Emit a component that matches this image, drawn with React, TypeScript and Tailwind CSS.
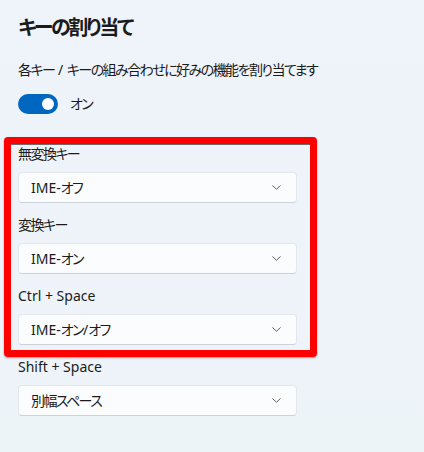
import React, { useState } from 'react';

const fieldFont = { fontFamily: '"Noto Sans", "Noto Sans CJK JP", sans-serif', fontFeatureSettings: '"palt"' };

interface Mapping {
  label: string;
  value: string;
}

const mappings: Mapping[] = [
  { label: '無変換キー', value: 'IME-オフ' },
  { label: '変換キー', value: 'IME-オン' },
  { label: 'Ctrl + Space', value: 'IME-オン/オフ' },
  { label: 'Shift + Space', value: '別幅スペース' },
];

// Yu Gothic UI kana run narrower than Noto's, so tighten only the CJK runs
const Jp: React.FC<{ text: string }> = ({ text }) => (
  <>
    {text.split(/([\u3000-\u9fff\uff00-\uffef]+)/).map((part, i) =>
      i % 2 === 1 ? (
        <span key={i} className="tracking-[-0.11em]">{part}</span>
      ) : (
        <React.Fragment key={i}>{part}</React.Fragment>
      )
    )}
  </>
);

const Chevron = () => (
  <svg width="9" height="5" viewBox="0 0 9 5" fill="none">
    <path d="M0.75 0.75l3.75 3.5 3.75-3.5" stroke="#5c5c5c" strokeWidth="1" strokeLinecap="round" strokeLinejoin="round" />
  </svg>
);

const Dropdown: React.FC<{ value: string }> = ({ value }) => (
  <button className="flex items-center justify-between w-[279px] h-[31px] pl-[12px] pr-[15px] rounded-[4px] bg-[#fbfcfd] border border-[#e3e7eb] border-b-[#cdd2d7] text-[14px] text-[#1b1b1b] leading-none">
    <span><Jp text={value} /></span>
    <Chevron />
  </button>
);

export default function App() {
  const [enabled, setEnabled] = useState(true);

  return (
    <div
      className="relative w-[424px] h-[452px] overflow-hidden bg-gradient-to-b from-[#eff3fa] to-[#edf4f8] text-[#1b1b1b]"
      style={fieldFont}
    >
      <div className="pl-[18px] pt-[14px]">
        <h2 className="text-[20px] leading-[28px] font-semibold tracking-[-0.12em]">キーの割り当て</h2>
        <p className="mt-[18px] text-[14px] leading-[20px]"><Jp text="各キー / キーの組み合わせに好みの機能を割り当てます" /></p>

        <div className="mt-[14px] flex items-center gap-[12px]">
          <button
            onClick={() => setEnabled(!enabled)}
            className="relative w-[40px] h-[20px] rounded-full bg-[#0067c0] flex items-center"
          >
            <span className="absolute right-[4px] w-[12px] h-[12px] rounded-full bg-white" />
          </button>
          <span className="text-[14px] leading-[20px]"><Jp text={enabled ? 'オン' : 'オフ'} /></span>
        </div>

        <div className="mt-[30px] flex flex-col">
          {mappings.map((m) => (
            <div key={m.label} className="flex flex-col mb-[12px]">
              <span className="text-[14px] leading-[20px]"><Jp text={m.label} /></span>
              <div className="mt-[8px]">
                <Dropdown value={m.value} />
              </div>
            </div>
          ))}
        </div>
      </div>

      {/* annotation highlight */}
      <div className="absolute left-[4px] top-[137px] w-[313px] h-[220px] border-[7px] border-[#ff0000] rounded-[4px] shadow-[0_1px_2px_rgba(0,0,0,0.35),inset_0_1px_0_#6b6b6b] pointer-events-none" />
    </div>
  );
}
